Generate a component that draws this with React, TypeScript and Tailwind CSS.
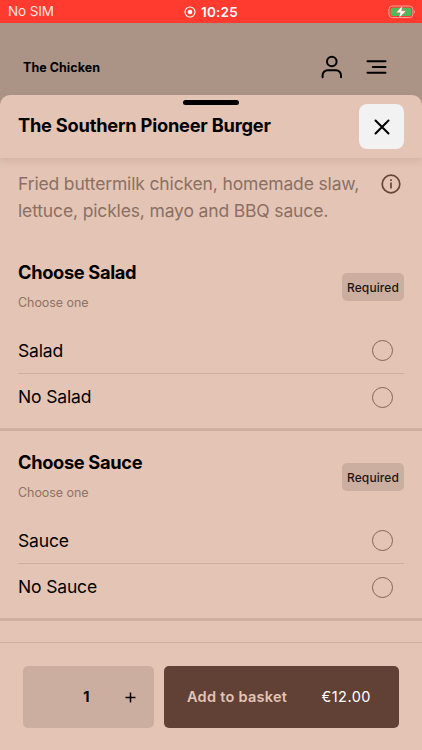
import React from "react";

type Group = {
  title: string;
  options: string[];
};

const groups: Group[] = [
  { title: "Choose Salad", options: ["Salad", "No Salad"] },
  { title: "Choose Sauce", options: ["Sauce", "No Sauce"] },
];

const StatusBar = () => {
  return (
    <div className="h-[23px] shrink-0 bg-[#ff3b30] text-white grid grid-cols-3 items-center pl-2 pr-[6px]">
      <span className="pt-px text-[13.5px] leading-none tracking-[-0.1px] text-[#ffe4e1]">No SIM</span>
      <div className="flex items-center justify-center gap-[5px] pt-px pr-[2px]">
        <svg width="12" height="12" viewBox="0 0 12 12" fill="none">
          <circle cx="6" cy="6" r="5" stroke="white" strokeWidth="1.1" />
          <circle cx="6" cy="6" r="2.3" fill="white" />
        </svg>
        <span className="pt-px text-[13.5px] leading-none font-semibold tracking-[0.2px]">10:25</span>
      </div>
      <svg className="justify-self-end" width="28" height="14" viewBox="0 0 28 14" fill="none">
        <rect x="0.9" y="1" width="24" height="11.6" rx="3.4" stroke="#ffa09a" strokeWidth="1" />
        <rect x="2.6" y="2.7" width="20.6" height="8.2" rx="2" fill="#4fba5c" />
        <path d="M26.2 5v3.6c1.1-.5 1.1-3.1 0-3.6z" fill="#ffa09a" />
        <path d="M14.8.2 8 7.8h4.2L10.6 13.6l7.6-7.8h-4.6z" fill="white" stroke="#ff3b30" strokeWidth=".4" />
      </svg>
    </div>
  );
};

const Navbar = () => {
  return (
    <div className="h-[72px] shrink-0 flex items-center justify-between pt-4 pl-[23px] pr-[35px]">
      <span className="pt-[2px] text-[12.5px] font-bold tracking-[0.05px]">The Chicken</span>
      <div className="flex items-center gap-[24px]">
        <svg width="22" height="24" viewBox="0 0 22 24" fill="none" stroke="black" strokeWidth="2" strokeLinecap="round">
          <circle cx="11.8" cy="6.5" r="4.8" />
          <path d="M2.6 22.3v-2a5 5 0 0 1 5-5h8.4a5 5 0 0 1 5 5v2" />
        </svg>
        <svg width="21" height="16" viewBox="0 0 21 16" fill="none" stroke="black" strokeWidth="2" strokeLinecap="round">
          <path d="M1.5 2.3h18M6.8 8h12.7M1.5 13.7h18" />
        </svg>
      </div>
    </div>
  );
};

const OptionGroup = ({ title, options }: Group) => {
  return (
    <section className="h-[190px] shrink-0 border-b-3 border-[#cfafa1] pl-[18px] pr-[18px] pt-[19px]">
      <div className="h-[67.5px] flex justify-between">
        <div>
          <h3 className="text-[18.25px] leading-6 font-bold tracking-[-0.33px]">{title}</h3>
          <p className="mt-[11px] text-[12.5px] leading-4 tracking-[-0.05px] text-[#8e7367]">Choose one</p>
        </div>
        <span className="mt-[13px] h-7 w-[62px] rounded-[5px] bg-[#ccaea1] flex items-center justify-center pt-px text-[12px] tracking-[0.1px] font-medium text-[#1d1310]">
          Required
        </span>
      </div>
      {options.map((option) => (
        <div
          key={option}
          className="h-[46.5px] flex items-center justify-between pt-px pr-[11px] border-b border-[#cfafa1] last:h-[45px] last:border-b-0"
        >
          <span className="pt-px text-[17.5px] tracking-[-0.15px]">{option}</span>
          <span className="size-[21px] rounded-full border border-[#826558]" />
        </div>
      ))}
    </section>
  );
};

const App = () => {
  return (
    <div className="h-[750px] w-full flex flex-col overflow-hidden bg-[#ab9386] text-black font-['Inter','Liberation_Sans',sans-serif]">
      <StatusBar />
      <Navbar />

      <div className="flex-1 min-h-0 flex flex-col rounded-t-[10px] bg-[#e4c4b5]">
        <div className="relative h-[63px] shrink-0 flex items-center justify-between pl-[18px] pr-[18px] shadow-[0_4px_7px_rgba(120,80,60,0.13)]">
          <div className="absolute left-[183px] top-[5px] h-[5px] w-14 rounded-full bg-black" />
          <h2 className="pb-px text-[18.25px] font-bold tracking-[-0.22px]">The Southern Pioneer Burger</h2>
          <button className="size-[45px] rounded-[8px] bg-[#f2f2f3] flex items-center justify-center">
            <svg width="16" height="16" viewBox="0 0 16 16" fill="none" stroke="black" strokeWidth="2" strokeLinecap="round">
              <path d="M1.5 1.5l13 13M14.5 1.5l-13 13" />
            </svg>
          </button>
        </div>

        <div className="h-[83px] shrink-0 flex justify-between pt-[12px] pl-[18px] pr-[21px]">
          <p className="text-[17.5px] leading-[27px] tracking-[-0.15px] text-[#8a7064] whitespace-nowrap">
            Fried buttermilk chicken, homemade slaw,
            <br />
            lettuce, pickles, mayo and BBQ sauce.
          </p>
          <svg className="mt-[4px] shrink-0" width="20" height="20" viewBox="0 0 20 20" fill="none" stroke="#6b4538">
            <circle cx="10" cy="10" r="8.8" strokeWidth="1.7" />
            <path d="M10 8.4v6" strokeWidth="1.7" />
            <path d="M10 5.2v1.8" strokeWidth="1.7" />
          </svg>
        </div>

        {groups.map((group) => (
          <OptionGroup key={group.title} {...group} />
        ))}

        <div className="mt-[21px] flex-1 flex items-start gap-[10px] border-t border-[#cfafa1] pt-[23px] pl-[23px] pr-[23px]">
          <div className="h-[62px] w-[130.5px] rounded-[5px] bg-[#ccaea1] flex items-center justify-end pr-[18px]">
            <span className="text-[14.5px] font-bold">1</span>
            <svg className="ml-[35px]" width="11" height="11" viewBox="0 0 11 11" stroke="black" strokeWidth="1.5">
              <path d="M.5 5.5h10M5.5.5v10" />
            </svg>
          </div>
          <button className="h-[62px] flex-1 rounded-[5px] bg-[#614136] flex items-center justify-between pl-[23.5px] pr-[28px]">
            <span className="text-[14.5px] font-semibold tracking-[0.27px] text-[#e4c4b5]">Add to basket</span>
            <span className="text-[14.5px] tracking-[0.5px] text-white">€12.00</span>
          </button>
        </div>
      </div>
    </div>
  );
};

export default App;
